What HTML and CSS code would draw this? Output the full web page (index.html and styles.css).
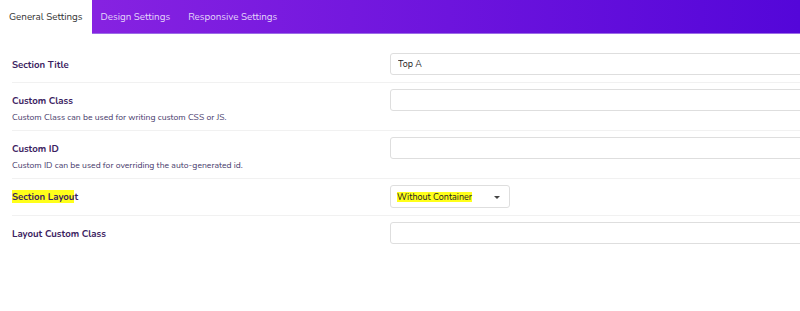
FILE: index.html
```html
<!DOCTYPE html>
<html lang="en">
<head>
  <meta charset="UTF-8" />
  <title>Section Settings</title>
  <link rel="stylesheet" href="styles.css">
</head>
<body>
  <!-- Tabs -->
  <div class="tabbar">
    <div class="tab active">General Settings</div>
    <div class="tab">Design Settings</div>
    <div class="tab">Responsive Settings</div>
  </div>

  <!-- General settings form -->
  <div class="settings">
    <div class="row">
      <div class="label-col">
        <label class="label" for="title">Section Title</label>
      </div>
      <input class="field" type="text" id="title" value="Top A" />
    </div>

    <div class="row">
      <div class="label-col">
        <label class="label" for="cls">Custom Class</label>
        <p class="help">Custom Class can be used for writing custom CSS or JS.</p>
      </div>
      <input class="field" type="text" id="cls" />
    </div>

    <div class="row">
      <div class="label-col">
        <label class="label" for="cid">Custom ID</label>
        <p class="help">Custom ID can be used for overriding the auto-generated id.</p>
      </div>
      <input class="field" type="text" id="cid" />
    </div>

    <div class="row">
      <div class="label-col">
        <label class="label" for="layout"><mark>Section Layou</mark>t</label>
      </div>
      <div class="select">
        <mark class="select-value">Without Container</mark>
        <span class="caret"></span>
      </div>
    </div>

    <div class="row last">
      <div class="label-col">
        <label class="label" for="lcls">Layout Custom Class</label>
      </div>
      <input class="field" type="text" id="lcls" />
    </div>
  </div>
</body>
</html>
```

FILE: styles.css
```css
body {
  margin: 0;
  font-family: 'Nunito', 'Lato', sans-serif;
  background: #fff;
  color: #3a2160;
}

.tabbar {
  display: flex;
  height: 34px;
  background: linear-gradient(90deg, #8d26e2, #5406d9);
  border-bottom: 1px solid #9b6ce6;
  box-sizing: border-box;
}

.tab {
  display: flex;
  align-items: center;
  padding: 0 9px 1px;
  font-size: 9.8px;
  color: #e4d6fa;
}

.tab.active {
  background: #fff;
  color: #333;
  margin-bottom: -1px;
}

.settings {
  padding: 13px 0 0 12px;
}

.row {
  display: grid;
  grid-template-columns: 378px 440px;
  padding: 6px 0 7px;
  border-bottom: 1px solid #f1f1f1;
}

.row.last {
  border-bottom: none;
}

.label-col {
  display: flex;
  flex-direction: column;
}

.label {
  display: flex;
  align-items: center;
  height: 22px;
  font-size: 9.6px;
  font-weight: 700;
  color: #3a2160;
}

.help {
  margin: 0;
  font-size: 8.6px;
  line-height: 12px;
  color: #45386a;
}

mark {
  background: #ffff1a;
  color: inherit;
}

.field {
  height: 22px;
  box-sizing: border-box;
  border: 1px solid #dedede;
  border-radius: 3px;
  padding: 0 7px;
  font-family: inherit;
  font-size: 9px;
  color: #222;
  outline: none;
}

.select {
  width: 120px;
  height: 23px;
  box-sizing: border-box;
  border: 1px solid #dedede;
  border-radius: 3px;
  display: flex;
  align-items: center;
  justify-content: space-between;
  padding: 1px 9px 0 6px;
}

.select-value {
  font-size: 9px;
  line-height: 10px;
  color: #222;
}

.caret {
  width: 0;
  height: 0;
  border-left: 3px solid transparent;
  border-right: 3px solid transparent;
  border-top: 3px solid #444;
}
```
